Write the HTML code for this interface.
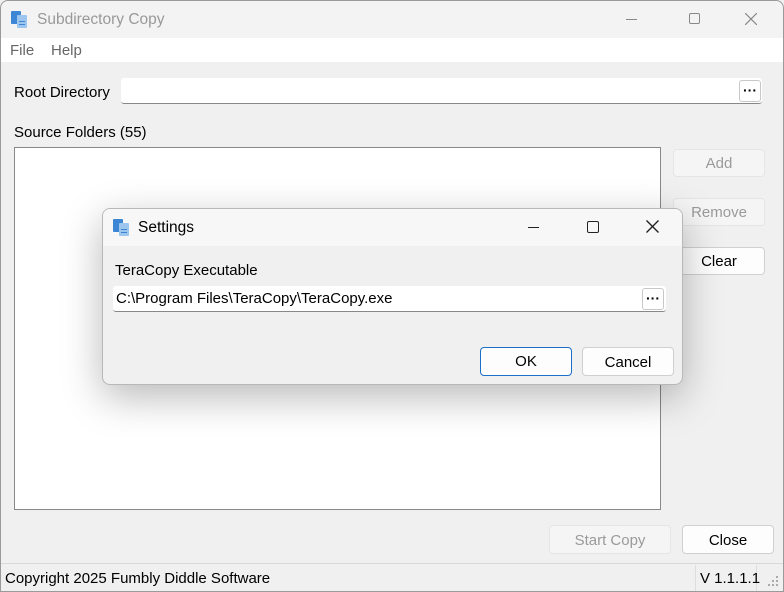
<!DOCTYPE html><html><head><style>
*{margin:0;padding:0;box-sizing:border-box}
body{width:784px;height:592px;overflow:hidden;font-family:"Segoe UI","Liberation Sans",sans-serif;font-size:15px;color:#000;background:#f0f0f0;position:relative}
.a{position:absolute}
.btn{position:absolute;border:1px solid #d0d0d0;border-radius:4px;background:#fdfdfd;text-align:center;font-size:15px}
.dis{background:#f5f5f5;border-color:#e5e5e5;color:#9a9a9a}
.dots{position:absolute;width:22px;height:22px;border:1px solid #c8c8c8;border-radius:3px;background:#fff;font-weight:bold;text-align:center;line-height:19px;font-size:14px}
</style></head><body>
<div class="a" style="left:0;top:0;width:784px;height:592px;border:1px solid #9a9a9a;border-radius:8px 8px 0 0"></div>
<div class="a" style="top:1px;left:1px;width:782px;height:37px;background:#f3f3f3;border-radius:8px 8px 0 0"></div>
<svg class="a" style="left:11px;top:10px" width="18" height="18"><rect x="0" y="1" width="10" height="13" rx="1" fill="#3d86d6"/><rect x="6" y="5" width="10" height="13" rx="1" fill="#9cc6ee"/><rect x="8" y="11" width="6" height="1" fill="#3d86d6"/><rect x="8" y="14" width="6" height="1" fill="#3d86d6"/></svg>
<div class="a" style="left:37px;top:11px;color:#999;font-size:15.5px">Subdirectory Copy</div>
<div class="a" style="left:626px;top:19px;width:11px;height:1px;background:#888"></div>
<div class="a" style="left:689px;top:13px;width:11px;height:11px;border:1px solid #888;border-radius:2px"></div>
<svg class="a" style="left:745px;top:13px" width="12" height="12"><path d="M0 0L12 12M12 0L0 12" stroke="#888" stroke-width="1.2"/></svg>
<div class="a" style="left:1px;top:38px;width:782px;height:24px;background:#fff"></div>
<div class="a" style="left:10px;top:42px;color:#666">File</div>
<div class="a" style="left:51px;top:42px;color:#666">Help</div>
<div class="a" style="left:14px;top:84px">Root Directory</div>
<div class="a" style="left:121px;top:78px;width:641px;height:26px;background:#fff;border-bottom:1px solid #888;border-radius:3px"></div>
<div class="dots" style="left:739px;top:80px">···</div>
<div class="a" style="left:14px;top:124px">Source Folders (55)</div>
<div class="a" style="left:14px;top:147px;width:647px;height:363px;background:#fff;border:1px solid #888"></div>
<div class="btn dis" style="left:673px;top:149px;width:92px;height:28px;line-height:28px">Add</div>
<div class="btn dis" style="left:673px;top:198px;width:92px;height:28px;line-height:28px">Remove</div>
<div class="btn" style="left:673px;top:247px;width:92px;height:28px;line-height:28px">Clear</div>
<div class="btn dis" style="left:549px;top:525px;width:122px;height:29px;line-height:29px">Start Copy</div>
<div class="btn" style="left:682px;top:525px;width:92px;height:29px;line-height:29px">Close</div>
<div class="a" style="left:1px;top:563px;width:782px;height:28px;background:#f0f0f0;border-top:1px solid #d8d8d8"></div>
<div class="a" style="left:5px;top:570px">Copyright 2025 Fumbly Diddle Software</div>
<div class="a" style="left:695px;top:565px;width:1px;height:26px;background:#ddd"></div>
<div class="a" style="left:756px;top:565px;width:1px;height:26px;background:#ddd"></div>
<div class="a" style="left:700px;top:570px">V 1.1.1.1</div>
<svg class="a" style="left:768px;top:576px" width="12" height="12"><g fill="#aaa"><rect x="8" y="0" width="2" height="2"/><rect x="4" y="4" width="2" height="2"/><rect x="8" y="4" width="2" height="2"/><rect x="0" y="8" width="2" height="2"/><rect x="4" y="8" width="2" height="2"/><rect x="8" y="8" width="2" height="2"/></g></svg>
<div class="a" style="left:102px;top:208px;width:581px;height:177px;background:#f0f0f0;border:1px solid #b8b8b8;border-radius:8px;box-shadow:0 12px 40px rgba(0,0,0,.28);overflow:hidden">
<div class="a" style="left:0;top:0;width:581px;height:37px;background:#f7f7f7"></div>
<svg class="a" style="left:10px;top:9px" width="18" height="18"><rect x="0" y="1" width="10" height="13" rx="1" fill="#3d86d6"/><rect x="6" y="5" width="10" height="13" rx="1" fill="#9cc6ee"/><rect x="8" y="11" width="6" height="1" fill="#3d86d6"/><rect x="8" y="14" width="6" height="1" fill="#3d86d6"/></svg>
<div class="a" style="left:35px;top:10px;font-size:15.5px">Settings</div>
<div class="a" style="left:425px;top:18px;width:11px;height:1px;background:#222"></div>
<div class="a" style="left:484px;top:12px;width:12px;height:12px;border:1.5px solid #222;border-radius:2px"></div>
<svg class="a" style="left:543px;top:11px" width="13" height="13"><path d="M0.5 0.5L12.5 12.5M12.5 0.5L0.5 12.5" stroke="#222" stroke-width="1.4"/></svg>
<div class="a" style="left:12px;top:53px">TeraCopy Executable</div>
<div class="a" style="left:10px;top:77px;width:553px;height:26px;background:#fff;border-bottom:1px solid #888;border-radius:3px"></div>
<div class="a" style="left:13px;top:81px">C:\Program Files\TeraCopy\TeraCopy.exe</div>
<div class="dots" style="left:539px;top:79px">···</div>
<div class="btn" style="left:377px;top:138px;width:92px;height:29px;line-height:27px;border:1.5px solid #1a6fc9">OK</div>
<div class="btn" style="left:479px;top:138px;width:92px;height:29px;line-height:29px">Cancel</div>
</div>
</body></html>
